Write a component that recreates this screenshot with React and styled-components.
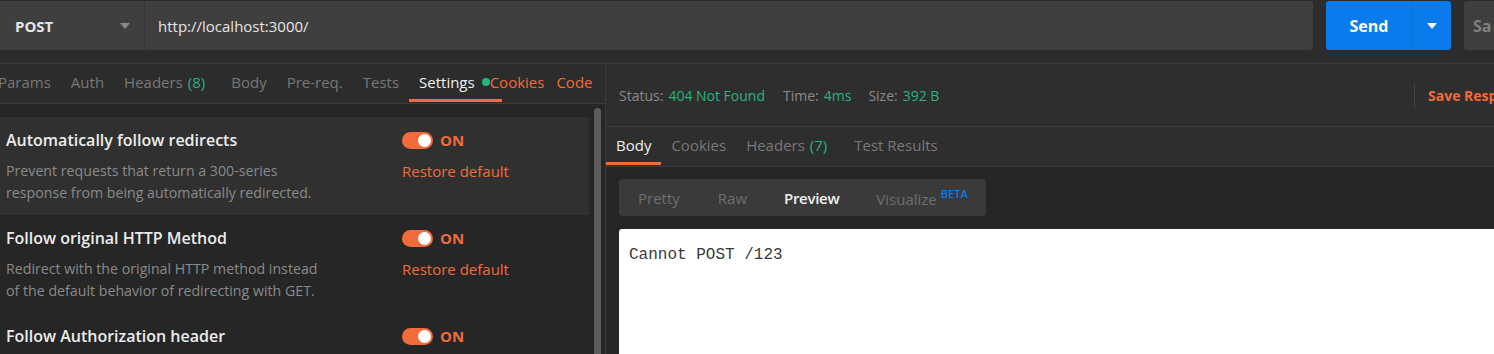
import React from 'react';
import styled, { createGlobalStyle } from 'styled-components';

const GlobalStyle = createGlobalStyle`
  html, body {
    margin: 0;
    padding: 0;
    background: #262626;
    overflow: hidden;
  }
  body {
    font-family: "Open Sans", "Noto Sans", sans-serif;
    font-size: 14px;
    color: #e0e0e0;
  }
`;

const orange = '#f26b3a';
const green = '#26b47f';
const blue = '#097bed';

const Page = styled.div`
  width: 1494px;
  height: 354px;
  display: flex;
  flex-direction: column;
  background: #262626;
  overflow: hidden;
`;

const TopBar = styled.div`
  height: 64px;
  flex: none;
  display: flex;
  align-items: flex-start;
  padding-top: 1px;
  background: #2c2c2c;
  border-bottom: 1px solid #3b3b3b;
  box-sizing: border-box;
`;

const UrlGroup = styled.div`
  display: flex;
  width: 1313px;
  height: 49px;
  background: #3f3f3f;
  border-radius: 0 3px 3px 0;
  margin-right: 13px;
`;

const MethodSelect = styled.div`
  width: 145px;
  display: flex;
  align-items: center;
  justify-content: space-between;
  padding: 0 14px 0 15px;
  box-sizing: border-box;
  border-right: 1px solid #363636;
  font-weight: 700;
  font-size: 15px;
  color: #e6e6e6;
`;

const Caret = styled.span`
  width: 0;
  height: 0;
  border-left: 5px solid transparent;
  border-right: 5px solid transparent;
  border-top: 6px solid ${p => p.color || '#8a8a8a'};
`;

const UrlText = styled.div`
  display: flex;
  align-items: center;
  padding-left: 13px;
  font-size: 15px;
  color: #e6e6e6;
`;

const SendButton = styled.div`
  width: 125px;
  height: 49px;
  display: flex;
  background: ${blue};
  border-radius: 3px;
  margin-right: 13px;
  color: #fff;
`;

const SendLabel = styled.div`
  flex: 1;
  display: flex;
  align-items: center;
  justify-content: center;
  font-size: 16px;
  font-weight: 700;
  border-right: 1px solid #0a6fd6;
`;

const SendMore = styled.div`
  width: 38px;
  display: flex;
  align-items: center;
  justify-content: center;
`;

const SaveButton = styled.div`
  flex: 1;
  height: 49px;
  background: #3f3f3f;
  border-radius: 3px 0 0 3px;
  display: flex;
  align-items: center;
  padding-left: 9px;
  font-size: 16px;
  font-weight: 700;
  color: #808080;
  overflow: hidden;
  white-space: nowrap;
`;

const Main = styled.div`
  flex: 1;
  display: flex;
  min-height: 0;
`;

const LeftPane = styled.div`
  width: 605px;
  flex: none;
  display: flex;
  flex-direction: column;
  border-right: 1px solid #3a3a3a;
  overflow: hidden;
`;

const TabRow = styled.div`
  height: 39px;
  flex: none;
  display: flex;
  align-items: stretch;
  background: ${p => p.bg || '#2c2c2c'};
  border-bottom: 1px solid #3b3b3b;
  margin-left: ${p => p.ml || 0}px;
  box-sizing: content-box;
  white-space: nowrap;
`;

const Tab = styled.div`
  position: relative;
  display: flex;
  align-items: center;
  padding: 0 ${p => p.pr ?? 10}px 4px ${p => p.pl ?? 10}px;
  margin-left: ${p => p.ml || 0}px;
  font-size: 15px;
  color: ${p => (p.active ? '#f0f0f0' : p.accent ? orange : '#787878')};
  &::after {
    content: '';
    display: ${p => (p.active ? 'block' : 'none')};
    position: absolute;
    left: 0;
    right: 0;
    bottom: 1px;
    height: 3px;
    background: ${orange};
  }
`;

const Count = styled.span`
  color: ${green};
  margin-left: 5px;
`;

const Dot = styled.span`
  width: 8px;
  height: 8px;
  margin-left: 7px;
  border-radius: 50%;
  background: ${green};
`;

const SettingsArea = styled.div`
  flex: 1;
  display: flex;
  min-height: 0;
  padding-top: 13px;
`;

const SettingsList = styled.div`
  width: 589px;
  flex: none;
  display: flex;
  flex-direction: column;
`;

const Scrollbar = styled.div`
  width: 7px;
  margin: -9px 0 0 5px;
  background: #5c5c5c;
  border-radius: 4px 4px 0 0;
`;

const SettingRow = styled.div`
  flex: none;
  display: grid;
  grid-template-columns: 396px 1fr;
  padding: 12px 0 0 6px;
  height: 98px;
  box-sizing: border-box;
  background: ${p => (p.hover ? '#303030' : 'transparent')};
`;

const SettingTitle = styled.div`
  font-size: 16px;
  font-weight: 600;
  line-height: 22px;
  color: #ececec;
`;

const SettingDesc = styled.div`
  margin-top: 9px;
  font-size: 14.2px;
  line-height: 22px;
  color: #8a8a8a;
`;

const ToggleLine = styled.div`
  display: flex;
  align-items: center;
  height: 20px;
  margin-top: 1px;
  gap: 7px;
  font-weight: 700;
  font-size: 15px;
  color: ${orange};
`;

const Switch = styled.span`
  width: 31px;
  height: 17px;
  border-radius: 9px;
  background: ${orange};
  position: relative;
  &::after {
    content: '';
    position: absolute;
    right: 2px;
    top: 2px;
    width: 13px;
    height: 13px;
    border-radius: 50%;
    background: #fff;
  }
`;

const RestoreLink = styled.div`
  margin-top: 10px;
  font-size: 15px;
  line-height: 22px;
  color: ${orange};
`;

const RightPane = styled.div`
  width: 940px;
  flex: none;
  display: flex;
  flex-direction: column;
`;

const StatusRow = styled.div`
  height: 63px;
  flex: none;
  display: flex;
  align-items: center;
  background: #2e2e2e;
  border-bottom: 1px solid #3b3b3b;
  padding: 0 0 0 13px;
  box-sizing: border-box;
  font-size: 14px;
  white-space: nowrap;
`;

const Stat = styled.span`
  color: #8a8a8a;
  margin-right: ${p => p.mr}px;
  & b {
    font-weight: 400;
    color: ${green};
    margin-left: 5px;
  }
`;

const SaveResponse = styled.div`
  margin-left: auto;
  width: 118px;
  border-left: 1px solid #444;
  height: 25px;
  display: flex;
  align-items: center;
  padding-left: 13px;
  font-size: 14px;
  font-weight: 700;
  color: ${orange};
`;

const ResponseBody = styled.div`
  flex: 1;
  padding: 12px 0 0 13px;
  display: flex;
  flex-direction: column;
  gap: 13px;
  background: #262626;
`;

const Segmented = styled.div`
  width: 367px;
  height: 37px;
  flex: none;
  display: flex;
  align-items: center;
  background: #3a3a3a;
  border-radius: 4px;
  padding-left: 19px;
  box-sizing: border-box;
`;

const Segment = styled.span`
  font-size: 15px;
  margin-right: ${p => p.mr || 0}px;
  color: ${p => (p.active ? '#f0f0f0' : '#6e6e6e')};
  font-weight: ${p => (p.active ? 600 : 400)};
  letter-spacing: ${p => (p.active ? '-0.3px' : 'normal')};
  white-space: nowrap;
`;

const Beta = styled.sup`
  margin-left: 4px;
  font-size: 11px;
  font-weight: 600;
  vertical-align: 7px;
  color: ${blue};
`;

const Preview = styled.div`
  flex: 1;
  background: #fff;
  border-radius: 3px 0 0 0;
  padding: 16px 10px;
  font-family: "Liberation Mono", "DejaVu Sans Mono", monospace;
  font-size: 16px;
  line-height: 20px;
  color: #3a3a3a;
`;

const settings = [
  {
    title: 'Automatically follow redirects',
    desc: ['Prevent requests that return a 300-series', 'response from being automatically redirected.'],
    hover: true,
  },
  {
    title: 'Follow original HTTP Method',
    desc: ['Redirect with the original HTTP method instead', 'of the default behavior of redirecting with GET.'],
  },
  {
    title: 'Follow Authorization header',
    desc: [],
  },
];

export default function App() {
  return (
    <Page>
      <GlobalStyle />
      <TopBar>
        <UrlGroup>
          <MethodSelect>
            POST
            <Caret />
          </MethodSelect>
          <UrlText>http://localhost:3000/</UrlText>
        </UrlGroup>
        <SendButton>
          <SendLabel>Send</SendLabel>
          <SendMore>
            <Caret color="#fff" />
          </SendMore>
        </SendButton>
        <SaveButton>Sa</SaveButton>
      </TopBar>
      <Main>
        <LeftPane>
          <TabRow ml={-12}>
            <Tab>Params</Tab>
            <Tab>Auth</Tab>
            <Tab pr={16}>
              Headers <Count>(8)</Count>
            </Tab>
            <Tab>Body</Tab>
            <Tab>Pre-req.</Tab>
            <Tab>Tests</Tab>
            <Tab active pr={12}>
              Settings
              <Dot />
            </Tab>
            <Tab accent pl={0} ml={-12}>Cookies</Tab>
            <Tab accent pl={2}>Code</Tab>
          </TabRow>
          <SettingsArea>
            <SettingsList>
              {settings.map(s => (
                <SettingRow key={s.title} hover={s.hover}>
                  <div>
                    <SettingTitle>{s.title}</SettingTitle>
                    {s.desc.length > 0 && (
                      <SettingDesc>
                        {s.desc[0]}
                        <br />
                        {s.desc[1]}
                      </SettingDesc>
                    )}
                  </div>
                  <div>
                    <ToggleLine>
                      <Switch />
                      ON
                    </ToggleLine>
                    {s.desc.length > 0 && <RestoreLink>Restore default</RestoreLink>}
                  </div>
                </SettingRow>
              ))}
            </SettingsList>
            <Scrollbar />
          </SettingsArea>
        </LeftPane>
        <RightPane>
          <StatusRow>
            <Stat mr={18}>
              Status:<b>404 Not Found</b>
            </Stat>
            <Stat mr={17}>
              Time:<b>4ms</b>
            </Stat>
            <Stat mr={0}>
              Size:<b>392 B</b>
            </Stat>
            <SaveResponse>Save Response</SaveResponse>
          </StatusRow>
          <TabRow bg="#2e2e2e">
            <Tab active>Body</Tab>
            <Tab>Cookies</Tab>
            <Tab pr={17}>
              Headers <Count>(7)</Count>
            </Tab>
            <Tab>Test Results</Tab>
          </TabRow>
          <ResponseBody>
            <Segmented>
              <Segment mr={38}>Pretty</Segment>
              <Segment mr={37}>Raw</Segment>
              <Segment active mr={37}>Preview</Segment>
              <Segment>
                Visualize
                <Beta>BETA</Beta>
              </Segment>
            </Segmented>
            <Preview>Cannot POST /123</Preview>
          </ResponseBody>
        </RightPane>
      </Main>
    </Page>
  );
}
